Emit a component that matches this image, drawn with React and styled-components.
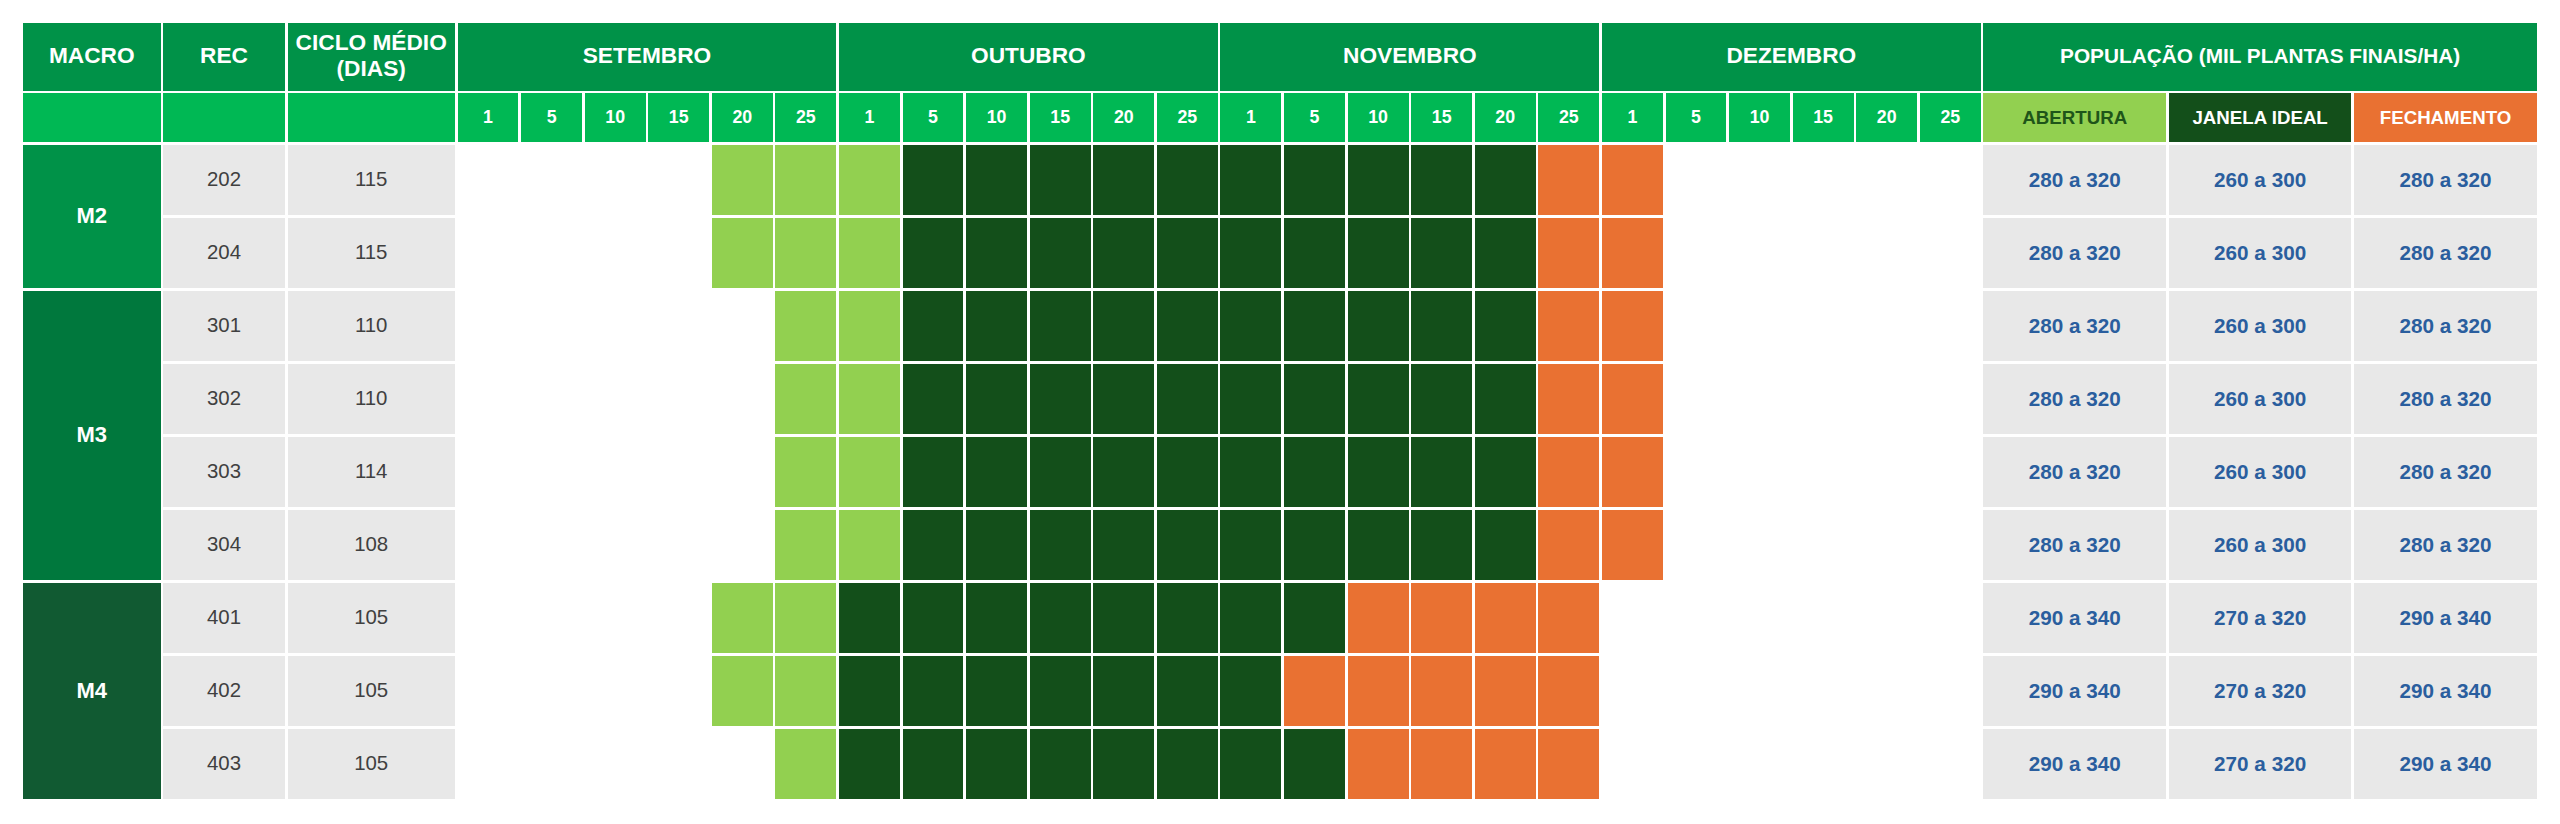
import React from "react";
import styled, { createGlobalStyle } from "styled-components";

const GlobalStyle = createGlobalStyle`
  body {
    margin: 0;
    background: #ffffff;
    font-family: "Liberation Sans", Arial, sans-serif;
  }
`;

const MONTHS = ["SETEMBRO", "OUTUBRO", "NOVEMBRO", "DEZEMBRO"];
const DAYS = ["1", "5", "10", "15", "20", "25"];

const COLORS = {
  header: "#009248",
  sub: "#00b854",
  light: "#92d050",
  dark: "#134f1a",
  orange: "#e97132",
  grey: "#e8e8e8",
};

const POP_A = ["280 a 320", "260 a 300", "280 a 320"];
const POP_B = ["290 a 340", "270 a 320", "290 a 340"];

// l = first light cell, d = first dark cell, o = first orange cell, e = end (exclusive)
const groups = [
  {
    macro: "M2",
    color: "#009248",
    rows: [
      { rec: "202", ciclo: "115", l: 4, d: 7, o: 17, e: 19, pop: POP_A },
      { rec: "204", ciclo: "115", l: 4, d: 7, o: 17, e: 19, pop: POP_A },
    ],
  },
  {
    macro: "M3",
    color: "#00783d",
    rows: [
      { rec: "301", ciclo: "110", l: 5, d: 7, o: 17, e: 19, pop: POP_A },
      { rec: "302", ciclo: "110", l: 5, d: 7, o: 17, e: 19, pop: POP_A },
      { rec: "303", ciclo: "114", l: 5, d: 7, o: 17, e: 19, pop: POP_A },
      { rec: "304", ciclo: "108", l: 5, d: 7, o: 17, e: 19, pop: POP_A },
    ],
  },
  {
    macro: "M4",
    color: "#115a32",
    rows: [
      { rec: "401", ciclo: "105", l: 4, d: 6, o: 14, e: 18, pop: POP_B },
      { rec: "402", ciclo: "105", l: 4, d: 6, o: 13, e: 18, pop: POP_B },
      { rec: "403", ciclo: "105", l: 5, d: 6, o: 14, e: 18, pop: POP_B },
    ],
  },
];

const cellColor = (row, i) => {
  if (i < row.l || i >= row.e) return "transparent";
  if (i < row.d) return COLORS.light;
  if (i < row.o) return COLORS.dark;
  return COLORS.orange;
};

const Page = styled.div`
  padding: 23.3px 0 0 23px;
`;

const Grid = styled.div`
  display: grid;
  grid-template-columns: 137.5px 121.7px 167.3px repeat(24, 60.9px) repeat(3, 182.7px);
  grid-template-rows: 67.4px 48.6px repeat(9, 70.3px);
  gap: 2.7px;
`;

const Cell = styled.div`
  display: flex;
  align-items: center;
  justify-content: center;
  text-align: center;
  background: ${(p) => p.$bg || "transparent"};
  color: ${(p) => p.$color || "#ffffff"};
  grid-column: span ${(p) => p.$span || 1};
  grid-row: span ${(p) => p.$rows || 1};
`;

const HeadCell = styled(Cell)`
  font-weight: 700;
  font-size: ${(p) => p.$size || 22.7}px;
  line-height: 1.13;
  padding-bottom: 2px;
`;

const DayCell = styled(Cell)`
  font-weight: 700;
  font-size: 17.8px;
`;

const MacroCell = styled(Cell)`
  font-weight: 700;
  font-size: 22px;
`;

const NumCell = styled(Cell)`
  background: ${COLORS.grey};
  color: #404040;
  font-size: 20.4px;
`;

const PopCell = styled(Cell)`
  background: ${COLORS.grey};
  color: #2a5e9e;
  font-weight: 700;
  font-size: 20.7px;
`;

const SubLabel = styled(Cell)`
  font-weight: 700;
  font-size: 18.7px;
`;

const App = () => {
  return (
    <Page>
      <GlobalStyle />
      <Grid>
        <HeadCell $bg={COLORS.header}>MACRO</HeadCell>
        <HeadCell $bg={COLORS.header}>REC</HeadCell>
        <HeadCell $bg={COLORS.header}>
          CICLO MÉDIO
          <br />
          (DIAS)
        </HeadCell>
        {MONTHS.map((m) => (
          <HeadCell key={m} $bg={COLORS.header} $span={6}>
            {m}
          </HeadCell>
        ))}
        <HeadCell $bg={COLORS.header} $span={3} $size={20.8}>
          POPULAÇÃO (MIL PLANTAS FINAIS/HA)
        </HeadCell>

        <Cell $bg={COLORS.sub} />
        <Cell $bg={COLORS.sub} />
        <Cell $bg={COLORS.sub} />
        {MONTHS.map((m) =>
          DAYS.map((d) => (
            <DayCell key={m + d} $bg={COLORS.sub}>
              {d}
            </DayCell>
          ))
        )}
        <SubLabel $bg={COLORS.light} $color="#1e5519">
          ABERTURA
        </SubLabel>
        <SubLabel $bg={COLORS.dark}>JANELA IDEAL</SubLabel>
        <SubLabel $bg={COLORS.orange}>FECHAMENTO</SubLabel>

        {groups.map((g) =>
          g.rows.map((row, ri) => (
            <React.Fragment key={row.rec}>
              {ri === 0 && (
                <MacroCell $bg={g.color} $rows={g.rows.length}>
                  {g.macro}
                </MacroCell>
              )}
              <NumCell>{row.rec}</NumCell>
              <NumCell>{row.ciclo}</NumCell>
              {Array.from({ length: 24 }, (_, i) => (
                <Cell key={i} $bg={cellColor(row, i)} />
              ))}
              {row.pop.map((p, pi) => (
                <PopCell key={pi}>{p}</PopCell>
              ))}
            </React.Fragment>
          ))
        )}
      </Grid>
    </Page>
  );
};

export default App;
